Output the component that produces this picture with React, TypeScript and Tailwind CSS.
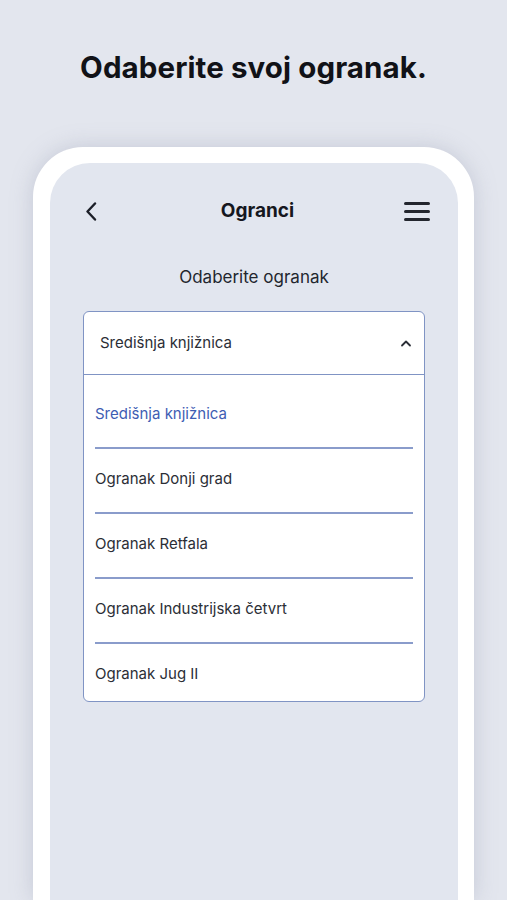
import React, { useState } from "react";

const branches: string[] = [
  "Središnja knjižnica",
  "Ogranak Donji grad",
  "Ogranak Retfala",
  "Ogranak Industrijska četvrt",
  "Ogranak Jug II",
];

const App: React.FC = () => {
  const [selected, setSelected] = useState<string>(branches[0]);
  const [open, setOpen] = useState<boolean>(true);

  return (
    <div
      className="h-[900px] w-full overflow-hidden bg-[#e3e6ee] flex flex-col items-center"
      style={{ fontFamily: "Inter, 'Noto Sans', sans-serif" }}
    >
      <h1 className="pt-[50px] text-[29.5px] leading-[34px] font-bold text-[#111217] tracking-[0.1px]">
        Odaberite svoj ogranak.
      </h1>

      {/* phone frame */}
      <div className="mt-[63px] w-[441px] flex-1 bg-white rounded-t-[50px] pt-[16px] pl-[17px] pr-[16px] shadow-[0_0_22px_rgba(140,146,170,0.35)] flex">
        <div className="flex-1 bg-[#e2e6ef] rounded-t-[40px] flex flex-col">
          {/* header */}
          <div className="mt-[28px] h-[40px] flex items-center justify-between pl-[35px] pr-[28px]">
            <button className="w-[26px] h-[26px] flex items-center">
              <svg width="12" height="19" viewBox="0 0 12 19" fill="none">
                <polyline
                  points="10,1.5 2.5,9.5 10,17.5"
                  stroke="#1c1f28"
                  strokeWidth="2.4"
                  strokeLinecap="round"
                  strokeLinejoin="round"
                />
              </svg>
            </button>
            <span className="text-[19px] font-bold text-[#15171e]">Ogranci</span>
            <button className="w-[26px] flex flex-col gap-[5px]">
              <span className="block h-[3px] w-[26px] rounded-full bg-[#23262e]" />
              <span className="block h-[3px] w-[26px] rounded-full bg-[#23262e]" />
              <span className="block h-[3px] w-[26px] rounded-full bg-[#23262e]" />
            </button>
          </div>

          <p className="mt-[35px] text-center text-[17px] leading-[22px] text-[#23262e]">
            Odaberite ogranak
          </p>

          {/* dropdown */}
          <div className="mt-[23px] mx-[33px] bg-white rounded-[6px] border-[1.5px] border-[#8094c4] overflow-hidden">
            <button
              onClick={() => setOpen(!open)}
              className="w-full h-[63px] flex items-center justify-between pl-[16px] pr-[12px] border-b-[1.5px] border-[#8094c4] text-left"
            >
              <span className="text-[15px] text-[#2b2e36]">{selected}</span>
              <svg width="12" height="7" viewBox="0 0 12 7" fill="none">
                <polyline
                  points="2,5.5 6,1.5 10,5.5"
                  stroke="#2b2e36"
                  strokeWidth="1.8"
                  strokeLinecap="round"
                  strokeLinejoin="round"
                />
              </svg>
            </button>
            {open && (
              <ul className="px-[11px] pt-[9px] pb-[1px]">
                {branches.map((b, i) => (
                  <li
                    key={b}
                    onClick={() => setSelected(b)}
                    className={`pt-[21px] cursor-pointer ${
                      i < branches.length - 1
                        ? "pb-[24px] border-b-2 border-[#8a9ccb]"
                        : "pb-[17px]"
                    }`}
                  >
                    <span
                      className={`block text-[15px] leading-[18px] ${
                        b === selected ? "text-[#3e5db3]" : "text-[#2b2e36]"
                      }`}
                    >
                      {b}
                    </span>
                  </li>
                ))}
              </ul>
            )}
          </div>
        </div>
      </div>
    </div>
  );
};

export default App;
